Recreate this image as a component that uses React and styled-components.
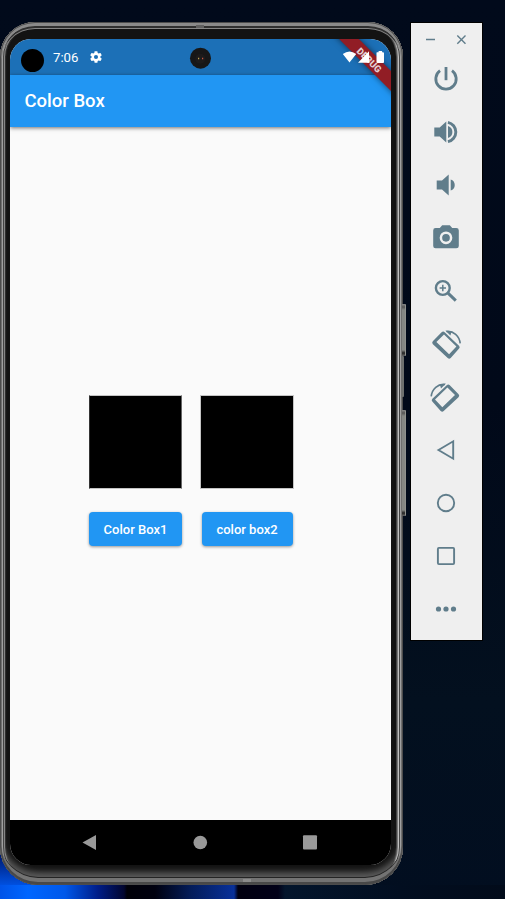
import React from "react";
import styled, { createGlobalStyle } from "styled-components";

const GlobalStyle = createGlobalStyle`
  * { box-sizing: border-box; }
  body { margin: 0; background: #020b1a; overflow: hidden; }
`;

const Desktop = styled.main`
  display: flex;
  align-items: flex-start;
  width: 505px;
  height: 899px;
  padding-top: 22px;
  overflow: hidden;
  font-family: Roboto, "Liberation Sans", sans-serif;
  background:
    linear-gradient(90deg, #0053e8 0, #0066ff 28px, #0058ea 65px, #001d88 98px, #01052f 124px, #000008 127px, #00000f 155px, #041c58 190px, #08309a 234px, #010010 238px, #010018 278px, #03152c 285px, #020e20 400px, #020b1a 505px) 0 885px / 505px 14px no-repeat,
    linear-gradient(180deg, #001a70, #0050e0) 0 855px / 60px 30px no-repeat,
    linear-gradient(180deg, #010a1b 0, #010919 45%, #03101f 78%, #020e20 100%);
`;

const Phone = styled.section`
  position: relative;
  width: 403px;
  height: 863px;
  padding: 17px 12px 20px 10px;
  border-radius: 35px 35px 38px 38px;
  background: #131313;
  box-shadow:
    inset 0 0 0 1px #4c4c4c,
    inset 0 3px 0 1px #8a8a8a,
    inset 0 -2px 0 1px #484848,
    inset 0 -7px 0 0 #737373,
    inset 0 0 0 2px #707070,
    inset 0 0 0 3px #a0a0a0,
    inset 0 5px 0 1px #303030,
    inset 0 6px 0 1px #858585,
    inset 0 -8px 0 0 #242424,
    inset 0 0 0 4px #444,
    inset -5px 0 0 0 #c0c0c0,
    inset -6px 0 0 0 #777,
    inset -7px 0 0 0 #444,
    inset 0 0 0 5px #858585,
    inset 0 -12px 6px 1px #5a5a5a,
    inset 0 0 1px 6px #303030;
`;

const Notch = styled.i`
  position: absolute;
  left: ${(p) => p.$x}px;
  ${(p) => (p.$bottom ? "bottom: 3px;" : "top: 3px;")}
  width: 8px;
  height: 3px;
  background: ${(p) => (p.$bottom ? "#8c8c8c" : "#606060")};
`;

const SideKey = styled.i`
  position: absolute;
  left: 402px;
  top: ${(p) => p.$top}px;
  width: ${(p) => (p.$thin ? 2 : 4)}px;
  height: ${(p) => p.$height}px;
  border-radius: 0 1px 1px 0;
  background: ${(p) =>
    p.$thin
      ? "#6e706f"
      : "linear-gradient(180deg, #888 0, #555 3px, #858784 6px, #858784 calc(100% - 6px), #222 calc(100% - 3px), #666 100%)"};
  border-right: ${(p) => (p.$thin ? 0 : 1)}px solid #8f918e;
`;

const Screen = styled.div`
  position: relative;
  display: flex;
  flex-direction: column;
  width: 381px;
  height: 826px;
  border-radius: 21px;
  overflow: hidden;
  background: #fafafa;
`;

const StatusBar = styled.header`
  display: flex;
  height: 36px;
  flex: none;
  background: #1c70b7;
  color: #fff;
`;

const TouchDot = styled.span`
  width: 23px;
  height: 23px;
  margin: 10px 0 0 10.5px;
  border-radius: 50%;
  background: #000;
`;

const Clock = styled.time`
  width: 36px;
  margin: 11px 0 0 9.5px;
  font-size: 13.2px;
  line-height: 16px;
`;

const Gear = styled.svg`
  width: 14px;
  height: 14px;
  margin: 11px 0 0 -0.4px;
`;

const Lens = styled.svg`
  position: absolute;
  left: 179px;
  top: 8px;
  width: 22px;
  height: 23px;
`;

const Signals = styled.svg`
  position: absolute;
  z-index: 3;
  right: 0;
  top: 11px;
  width: 51px;
  height: 16px;
`;

const AppBar = styled.div`
  display: flex;
  align-items: center;
  flex: none;
  height: 52px;
  padding-left: 14.5px;
  background: #2196f3;
  box-shadow: 0 1px 4px rgba(0, 0, 0, 0.55);
`;

const Title = styled.h1`
  margin: 0;
  color: #fff;
  font-size: 18.5px;
  font-weight: 500;
  line-height: 24px;
`;

const Debug = styled.span`
  position: absolute;
  z-index: 2;
  left: 308px;
  top: 14px;
  width: 104px;
  height: 14px;
  padding-right: 1px;
  transform: rotate(45deg);
  background: #911d25;
  box-shadow: 0 0 6px rgba(0, 0, 0, 0.55);
  color: #e3cdd1;
  font-size: 9.5px;
  font-weight: 900;
  line-height: 15px;
  text-align: center;
`;

const Body = styled.div`
  display: flex;
  flex: 1;
  justify-content: center;
  gap: 18px;
  padding: 268px 18px 0 0;
`;

const Column = styled.div`
  display: flex;
  flex-direction: column;
  align-items: center;
  gap: 23px;
  width: ${(p) => p.$width}px;
`;

const ColorSquare = styled.div`
  width: 100%;
  height: 94px;
  background: #000;
  border: 1px solid;
  border-color: ${(p) => (p.$soft ? "#c4c4c4" : "#c4c4c4 #666 #c4c4c4 #333")};
`;

const RaisedButton = styled.button`
  width: ${(p) => p.$width}px;
  height: 34px;
  padding: 0;
  border: 0;
  border-radius: 4px;
  background: #2196f3;
  color: #fff;
  font: 500 13px/35px Roboto, sans-serif;
  box-shadow: 0 1px 3px rgba(0, 0, 0, 0.4);
`;

const NavBar = styled.nav`
  display: flex;
  height: 45px;
  flex: none;
  background: #000;
  svg { width: 381px; height: 45px; }
`;

const Toolbar = styled.aside`
  display: flex;
  flex-direction: column;
  align-items: center;
  width: 73px;
  height: 619px;
  margin-left: 7px;
  border: 1px solid #000;
  background: #efefef;
  color: #607d8b;
`;

const WindowControls = styled.svg`
  width: 71px;
  height: 29px;
  flex: none;
`;

const Tool = styled.button`
  display: flex;
  align-items: center;
  justify-content: center;
  width: 71px;
  height: 53px;
  flex: none;
  padding: 0 1px 0 0;
  border: 0;
  background: none;
  color: inherit;
  svg { width: 32px; height: 32px; overflow: visible; }
`;

const Drawing = ({ children }) => (
  <svg viewBox="0 0 32 32" fill="currentColor" aria-hidden="true">{children}</svg>
);

const RotatedDevice = () => (
  <g transform="translate(.4 .4)">
    <path fillRule="evenodd" d="M2.4 12.8 11.2 3.8Q12.8 2.3 14.3 3.8L28.6 17.3Q30 18.8 28.7 20.2L20.3 29.6Q18.8 31 17.3 29.6L2.5 15.8Q1.1 14.2 2.4 12.8ZM6 13.6 18.7 25.8 26 18 13.6 6.2Z" />
    <path d="M16 3.1C23.1 2.2 29 7.5 29.8 15" fill="none" stroke="currentColor" strokeWidth="1.6" />
    <path d="m15 2.2 6.2.9-1.2 3.9Z" />
  </g>
);

const tools = [
  ["Power", <g transform="translate(0 .5)"><path d="M10 7.2a10.2 10.2 0 1 0 12 0" fill="none" stroke="currentColor" strokeWidth="2.8" /><path d="M14.6 3.5h2.8v13.2h-2.8z" /></g>],
  ["Volume up", <><path d="M4.3 11.4h5.4l6.6-5.9v21l-6.6-5.9H4.3ZM18 10a6.3 6.3 0 0 1 0 12Z" /><path d="M17.9 6.3a9.9 9.9 0 0 1 0 19.4" fill="none" stroke="currentColor" strokeWidth="2.9" /></>],
  ["Volume down", <path d="M6.7 11.4H12l6.7-5.8v20.8L12 20.6H6.7ZM20.7 10.4a5.9 5.9 0 0 1 0 11.2Z" />],
  ["Take screenshot", <g transform="translate(0 -1.2)"><path d="M12.2 4.5h7.6l2.4 2.7h4.1q2.5 0 2.5 2.4v15.6q0 2.3-2.5 2.3H5.6q-2.4 0-2.4-2.3V9.6q0-2.4 2.4-2.4h4.2Z" /><circle cx="16" cy="17" r="5.1" stroke="#efefef" strokeWidth="2.5" /></g>],
  ["Zoom", <g fill="none" stroke="currentColor"><circle cx="12.8" cy="13" r="6.9" strokeWidth="2.4" /><path d="m18 18.2 7.8 7.5" strokeWidth="3" /><path d="M9.6 13h6.4m-3.2-3.2v6.4" strokeWidth="1.5" /></g>],
  ["Rotate left", <RotatedDevice />],
  ["Rotate right", <g transform="translate(31.4 0) scale(-1 1)"><RotatedDevice /></g>],
  ["Back", <path d="M8.5 16 23.2 7.3v17.4Z" fill="none" stroke="currentColor" strokeWidth="1.9" />],
  ["Home", <circle cx="16" cy="16" r="8.2" fill="none" stroke="currentColor" strokeWidth="1.9" />],
  ["Overview", <rect x="7.9" y="7.9" width="16.2" height="16.2" rx="1" fill="none" stroke="currentColor" strokeWidth="1.9" />],
  ["More", <><circle cx="8.5" cy="16" r="2.6" /><circle cx="16" cy="16" r="2.6" /><circle cx="23.5" cy="16" r="2.6" /></>],
];

export default function App() {
  return (
    <>
      <GlobalStyle />
      <Desktop>
        <Phone>
          <Notch $x={196} />
          <Notch $x={243} $bottom />
          <SideKey $top={282} $height={52} />
          <SideKey $thin $top={334} $height={41} />
          <SideKey $top={388} $height={106} />
          <Screen>
            <StatusBar>
              <TouchDot />
              <Clock>7:06</Clock>
              <Gear viewBox="0 0 24 24" fill="currentColor"><path d="M19.43 12.98c.04-.32.07-.64.07-.98s-.03-.66-.07-.98l2.11-1.65c.19-.15.24-.42.12-.64l-2-3.46c-.12-.22-.39-.3-.61-.22l-2.49 1c-.52-.4-1.08-.73-1.69-.98l-.38-2.65A.49.49 0 0 0 14 2h-4c-.25 0-.46.18-.49.42l-.38 2.65c-.61.25-1.17.59-1.69.98l-2.49-1c-.23-.09-.49 0-.61.22l-2 3.46c-.13.22-.07.49.12.64l2.11 1.65c-.04.32-.07.65-.07.98s.03.66.07.98l-2.11 1.65c-.19.15-.24.42-.12.64l2 3.46c.12.22.39.3.61.22l2.49-1c.52.4 1.08.73 1.69.98l.38 2.65c.03.24.24.42.49.42h4c.25 0 .46-.18.49-.42l.38-2.65c.61-.25 1.17-.59 1.69-.98l2.49 1c.23.09.49 0 .61-.22l2-3.46c.12-.22.07-.49-.12-.64ZM12 15.5a3.5 3.5 0 1 1 0-7 3.5 3.5 0 0 1 0 7Z" /></Gear>
              <Lens viewBox="0 0 22 23"><circle cx="11.5" cy="11.2" r="10.5" fill="#171717" /><circle cx="11.3" cy="11.7" r="5" fill="#1d1b1b" /><path d="M9 11.5h1.2" stroke="#b8a050" strokeWidth="1.6" /><path d="M13 11.5h1.2" stroke="#c85440" strokeWidth="1.6" /></Lens>
              <Signals viewBox="0 0 51 16" fill="#fff"><path d="M2.8 4.1Q9.5-1 16.2 4.1L9.5 12.6ZM29 1.2V12.8H18ZM37 2.2h1.6V1h3.5v1.2H43q1 0 1 1v9q0 .8-1 .8h-5.5q-1 0-1-.8V3q0-.8.5-.8Z" /></Signals>
            </StatusBar>
            <AppBar><Title>Color Box</Title></AppBar>
            <Debug>DEBUG</Debug>
            <Body>
              <Column $width={93}><ColorSquare /><RaisedButton $width={93}>Color Box1</RaisedButton></Column>
              <Column $width={94}><ColorSquare $soft /><RaisedButton $width={91}>color box2</RaisedButton></Column>
            </Body>
            <NavBar><svg viewBox="0 0 381 45" fill="#999"><path d="M72.5 22.5 86 15v15Z" /><circle cx="190.3" cy="22.5" r="6.8" /><rect x="293" y="15.3" width="14" height="14.2" rx="1" /></svg></NavBar>
          </Screen>
        </Phone>
        <Toolbar>
          <WindowControls viewBox="0 0 71 29" fill="none" stroke="currentColor" strokeWidth="1.4"><path d="M15 16.5h9M46.3 12.5l8.2 8.2m0-8.2-8.2 8.2" /></WindowControls>
          {tools.map(([name, drawing]) => <Tool key={name} aria-label={name}><Drawing>{drawing}</Drawing></Tool>)}
        </Toolbar>
      </Desktop>
    </>
  );
}
